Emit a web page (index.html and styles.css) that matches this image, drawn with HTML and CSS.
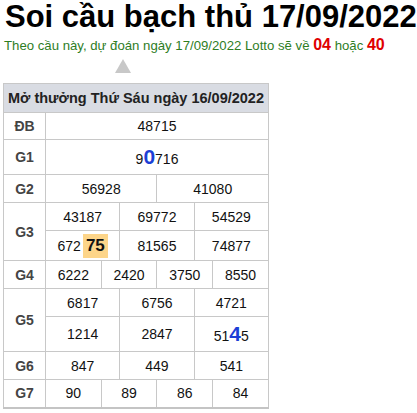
FILE: index.html
```html
<!DOCTYPE html>
<html lang="vi">
<head>
<meta charset="UTF-8" />
<meta name="viewport" content="width=device-width, initial-scale=1" />
<title>Soi cầu bạch thủ 17/09/2022</title>
<link rel="stylesheet" href="styles.css">
</head>
<body>

<h1 class="title">Soi cầu bạch thủ 17/09/2022</h1>
<p class="predict">Theo cầu này, dự đoán ngày 17/09/2022 Lotto sẽ về <b>04</b> hoặc <b>40</b></p>

<div class="pointer"><span class="arrow"></span></div>

<table class="kq">
  <colgroup>
    <col class="c-label">
    <col><col><col><col><col><col><col><col><col><col><col><col>
  </colgroup>
  <thead>
    <tr><th colspan="13">Mở thưởng Thứ Sáu ngày 16/09/2022</th></tr>
  </thead>
  <tbody>
    <tr class="r-db"><td class="lbl">ĐB</td><td colspan="12">48715</td></tr>
    <tr class="r-g1"><td class="lbl">G1</td><td colspan="12">9<em class="hit">0</em>716</td></tr>
    <tr class="r-g2"><td class="lbl">G2</td><td colspan="6">56928</td><td colspan="6">41080</td></tr>
    <tr class="r-g3a"><td class="lbl" rowspan="2">G3</td><td colspan="4">43187</td><td colspan="4">69772</td><td colspan="4">54529</td></tr>
    <tr class="r-g3b"><td colspan="4">672<mark class="mark">75</mark></td><td colspan="4">81565</td><td colspan="4">74877</td></tr>
    <tr class="r-g4"><td class="lbl">G4</td><td colspan="3">6222</td><td colspan="3">2420</td><td colspan="3">3750</td><td colspan="3">8550</td></tr>
    <tr class="r-g5a"><td class="lbl" rowspan="2">G5</td><td colspan="4">6817</td><td colspan="4">6756</td><td colspan="4">4721</td></tr>
    <tr class="r-g5b"><td colspan="4">1214</td><td colspan="4">2847</td><td colspan="4">51<em class="hit">4</em>5</td></tr>
    <tr class="r-g6"><td class="lbl">G6</td><td colspan="4">847</td><td colspan="4">449</td><td colspan="4">541</td></tr>
    <tr class="r-g7"><td class="lbl">G7</td><td colspan="3">90</td><td colspan="3">89</td><td colspan="3">86</td><td colspan="3">84</td></tr>
  </tbody>
</table>

</body>
</html>
```

FILE: styles.css
```css
* {
  box-sizing: border-box;
}
body {
  margin: 0;
  padding: 0 3px;
  font-family: "Liberation Sans", Arial, sans-serif;
  color: #222;
  background: #fff;
}
.title {
  margin: 0 0 0 2px;
  font-size: 31px;
  line-height: 34px;
  font-weight: 700;
  color: #000;
  white-space: nowrap;
}
.predict {
  margin: 1px 0 0 1px;
  font-size: 13.2px;
  line-height: 20px;
  color: #2e7d1f;
  white-space: nowrap;
}
.predict b {
  color: #e00000;
  font-size: 16px;
}
.pointer {
  width: 266px;
  height: 27px;
  display: flex;
  align-items: flex-end;
  padding: 0 0 10px 112px;
}
.arrow {
  width: 0;
  height: 0;
  border-left: 8px solid transparent;
  border-right: 8px solid transparent;
  border-bottom: 14px solid #c8c8c8;
}
.kq {
  width: 266px;
  border-collapse: collapse;
  table-layout: fixed;
  font-size: 14px;
  text-align: center;
  border-bottom: 2px solid #c4c4c4;
}
.c-label {
  width: 42px;
}
.kq th,
.kq td {
  border: 1px solid #c8c8c8;
  padding: 0;
}
.kq th {
  height: 29px;
  background: #d9dce3;
  font-size: 14.5px;
  font-weight: 700;
  color: #222;
}
.kq td {
  height: 28px;
  color: #111;
}
.kq td.lbl {
  font-weight: 700;
  color: #444;
}
.r-db td { height: 27px; }
.r-g1 td { height: 35px; }
.r-g3b td { height: 30px; }
.r-g5b td { height: 35px; }
.hit {
  font-style: normal;
  font-weight: 700;
  font-size: 21px;
  color: #1d3fd6;
}
.mark {
  display: inline-block;
  padding: 2px 3px;
  margin-left: 2px;
  background: #fdd589;
  font-weight: 700;
  font-size: 17px;
  color: #111;
  line-height: 20px;
}
```
